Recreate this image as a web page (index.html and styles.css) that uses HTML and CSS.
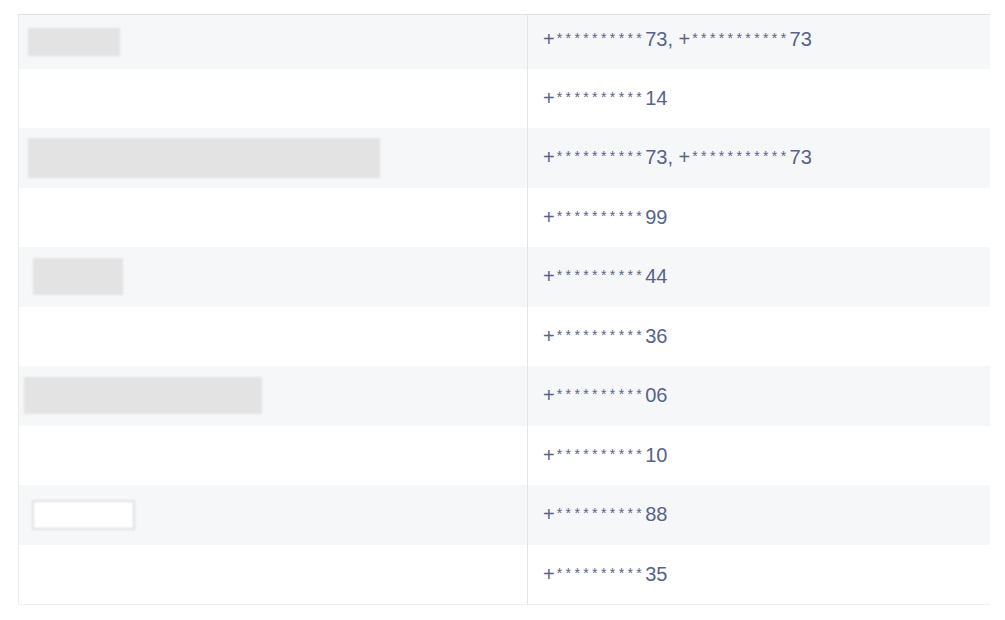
FILE: index.html
```html
<!doctype html>
<html lang="en">
<head>
    <meta charset="utf-8" />
    <title>Contacts</title>
    <link rel="stylesheet" href="styles.css">
</head>
<body>
    <div class="wrap">
        <table class="contacts">
            <tr class="first">
                <td class="name"><div class="mask mask-a"></div></td>
                <td class="phone">+<span class="stars">**********</span>73, +<span class="stars">***********</span>73</td>
            </tr>
            <tr>
                <td class="name"></td>
                <td class="phone">+<span class="stars">**********</span>14</td>
            </tr>
            <tr>
                <td class="name"><div class="mask mask-b"></div></td>
                <td class="phone">+<span class="stars">**********</span>73, +<span class="stars">***********</span>73</td>
            </tr>
            <tr>
                <td class="name"></td>
                <td class="phone">+<span class="stars">**********</span>99</td>
            </tr>
            <tr>
                <td class="name"><div class="mask mask-c"></div></td>
                <td class="phone">+<span class="stars">**********</span>44</td>
            </tr>
            <tr>
                <td class="name"></td>
                <td class="phone">+<span class="stars">**********</span>36</td>
            </tr>
            <tr>
                <td class="name"><div class="mask mask-d"></div></td>
                <td class="phone">+<span class="stars">**********</span>06</td>
            </tr>
            <tr>
                <td class="name"></td>
                <td class="phone">+<span class="stars">**********</span>10</td>
            </tr>
            <tr>
                <td class="name"><div class="mask mask-e"></div></td>
                <td class="phone">+<span class="stars">**********</span>88</td>
            </tr>
            <tr>
                <td class="name"></td>
                <td class="phone">+<span class="stars">**********</span>35</td>
            </tr>
        </table>
    </div>
</body>
</html>
```

FILE: styles.css
```css
*{ padding:0; margin:0; }
body
{
    background:#fff;
    font-family:"Liberation Sans", Arial, sans-serif;
}
.wrap
{
    padding:14px 15px 0 18px;
}
.contacts
{
    width:972px;
    border-collapse:collapse;
    border-top:1px solid #dfe0e3;
    border-left:1px solid #e9eaec;
    border-bottom:1px solid #f0f1f3;
}
.contacts tr
{
    height:59.5px;
}
.contacts tr.first
{
    height:54px;
}
.contacts tr.first td.phone
{
    padding-bottom:5px;
}
.contacts tr:nth-child(odd)
{
    background:#f6f7f9;
}
.contacts td
{
    vertical-align:middle;
}
.contacts td.name
{
    width:508px;
    border-right:1px solid #e4e5e8;
    padding:0;
}
.contacts td.phone
{
    padding-left:15px;
    font-size:20px;
    color:#56638a;
    white-space:nowrap;
}
.stars
{
    font-size:14px;
    letter-spacing:3.4px;
    margin-left:2px;
    vertical-align:3px;
}
.mask
{
    background:#e3e3e4;
    filter:blur(0.8px);
}
.mask-a
{
    width:92px;
    height:28px;
    margin-left:9px;
}
.mask-b
{
    width:352px;
    height:40px;
    margin-left:9px;
}
.mask-c
{
    width:90px;
    height:37px;
    margin-left:14px;
}
.mask-d
{
    width:238px;
    height:37px;
    margin-left:5px;
}
.mask-e
{
    width:99px;
    height:26px;
    margin-left:13px;
    background:#fff;
    border:2px solid #e0e0e1;
}
```
